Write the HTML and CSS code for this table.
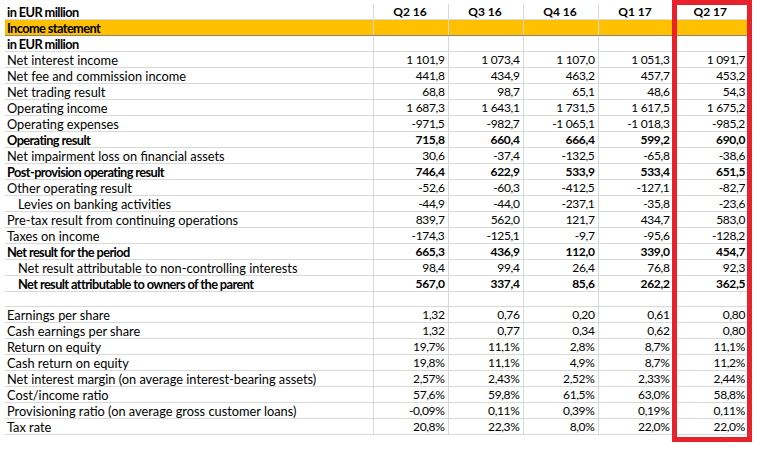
FILE: index.html
```html
<!DOCTYPE html>
<html>
<head>
<meta charset="utf-8">
<link rel="stylesheet" href="styles.css">
</head>
<body>
<div class="sheet">
  <table class="grid">
    <colgroup>
      <col class="c-label"><col class="c-num"><col class="c-num"><col class="c-num"><col class="c-num"><col class="c-num">
    </colgroup>
    <tbody>
      <tr class="head b"><td>in EUR million</td><td>Q2 16</td><td>Q3 16</td><td>Q4 16</td><td>Q1 17</td><td>Q2 17</td></tr>
      <tr class="section b"><td>Income statement</td><td></td><td></td><td></td><td></td><td></td></tr>
      <tr class="b"><td>in EUR million</td><td></td><td></td><td></td><td></td><td></td></tr>
      <tr><td>Net interest income</td><td>1 101,9</td><td>1 073,4</td><td>1 107,0</td><td>1 051,3</td><td>1 091,7</td></tr>
      <tr><td>Net fee and commission income</td><td>441,8</td><td>434,9</td><td>463,2</td><td>457,7</td><td>453,2</td></tr>
      <tr><td>Net trading result</td><td>68,8</td><td>98,7</td><td>65,1</td><td>48,6</td><td>54,3</td></tr>
      <tr><td>Operating income</td><td>1 687,3</td><td>1 643,1</td><td>1 731,5</td><td>1 617,5</td><td>1 675,2</td></tr>
      <tr><td>Operating expenses</td><td>-971,5</td><td>-982,7</td><td>-1 065,1</td><td>-1 018,3</td><td>-985,2</td></tr>
      <tr class="b"><td>Operating result</td><td>715,8</td><td>660,4</td><td>666,4</td><td>599,2</td><td>690,0</td></tr>
      <tr><td>Net impairment loss on financial assets</td><td>30,6</td><td>-37,4</td><td>-132,5</td><td>-65,8</td><td>-38,6</td></tr>
      <tr class="b"><td>Post-provision operating result</td><td>746,4</td><td>622,9</td><td>533,9</td><td>533,4</td><td>651,5</td></tr>
      <tr><td>Other operating result</td><td>-52,6</td><td>-60,3</td><td>-412,5</td><td>-127,1</td><td>-82,7</td></tr>
      <tr class="ind"><td>Levies on banking activities</td><td>-44,9</td><td>-44,0</td><td>-237,1</td><td>-35,8</td><td>-23,6</td></tr>
      <tr><td>Pre-tax result from continuing operations</td><td>839,7</td><td>562,0</td><td>121,7</td><td>434,7</td><td>583,0</td></tr>
      <tr><td>Taxes on income</td><td>-174,3</td><td>-125,1</td><td>-9,7</td><td>-95,6</td><td>-128,2</td></tr>
      <tr class="b"><td>Net result for the period</td><td>665,3</td><td>436,9</td><td>112,0</td><td>339,0</td><td>454,7</td></tr>
      <tr class="ind"><td>Net result attributable to non-controlling interests</td><td>98,4</td><td>99,4</td><td>26,4</td><td>76,8</td><td>92,3</td></tr>
      <tr class="ind b"><td>Net result attributable to owners of the parent</td><td>567,0</td><td>337,4</td><td>85,6</td><td>262,2</td><td>362,5</td></tr>
      <tr><td></td><td></td><td></td><td></td><td></td><td></td></tr>
      <tr><td>Earnings per share</td><td>1,32</td><td>0,76</td><td>0,20</td><td>0,61</td><td>0,80</td></tr>
      <tr><td>Cash earnings per share</td><td>1,32</td><td>0,77</td><td>0,34</td><td>0,62</td><td>0,80</td></tr>
      <tr><td>Return on equity</td><td>19,7%</td><td>11,1%</td><td>2,8%</td><td>8,7%</td><td>11,1%</td></tr>
      <tr><td>Cash return on equity</td><td>19,8%</td><td>11,1%</td><td>4,9%</td><td>8,7%</td><td>11,2%</td></tr>
      <tr><td>Net interest margin (on average interest-bearing assets)</td><td>2,57%</td><td>2,43%</td><td>2,52%</td><td>2,33%</td><td>2,44%</td></tr>
      <tr><td>Cost/income ratio</td><td>57,6%</td><td>59,8%</td><td>61,5%</td><td>63,0%</td><td>58,8%</td></tr>
      <tr><td>Provisioning ratio (on average gross customer loans)</td><td>-0,09%</td><td>0,11%</td><td>0,39%</td><td>0,19%</td><td>0,11%</td></tr>
      <tr><td>Tax rate</td><td>20,8%</td><td>22,3%</td><td>8,0%</td><td>22,0%</td><td>22,0%</td></tr>
    </tbody>
  </table>
  <div class="highlight"></div>
</div>
</body>
</html>
```
FILE: styles.css
```css
html, body {
  margin: 0;
  padding: 0;
  background: #ffffff;
}
body {
  font-family: Lato, "Liberation Sans", sans-serif;
  font-size: 12.8px;
  color: #000;
}
.sheet {
  position: relative;
  padding: 4px 0 0 5px;
  min-height: 446px;
}
.grid {
  border-collapse: collapse;
  table-layout: fixed;
  width: 743px;
}
.c-label { width: 368px; }
.c-num { width: 75px; }
.grid td {
  height: 15px;
  padding: 1px 3px 0 2px;
  line-height: 14px;
  font-size: 12px;
  letter-spacing: -0.35px;
  border-bottom: 1px solid #d9d9d9;
  white-space: nowrap;
  overflow: hidden;
  text-align: right;
  vertical-align: middle;
  box-sizing: border-box;
}
.grid td + td {
  border-left: 1px solid #d9d9d9;
}
.grid td:first-child {
  text-align: left;
  font-size: 12.8px;
  letter-spacing: 0;
}
.head td {
  text-align: center;
}
.head td + td {
  letter-spacing: 0;
}
.head td:first-child { text-align: left; }
.section td {
  background: #ffc000;
  border-left-color: #ffc000;
  border-bottom: 1px solid #8c8470;
}
.b td {
  font-weight: bold;
}
.b td:first-child {
  letter-spacing: -0.6px;
}
.ind td:first-child { padding-left: 13px; }
.highlight {
  position: absolute;
  left: 672px;
  top: 0;
  width: 80px;
  height: 442px;
  box-sizing: border-box;
  border: 5px solid #e8222a;
  pointer-events: none;
}
```
